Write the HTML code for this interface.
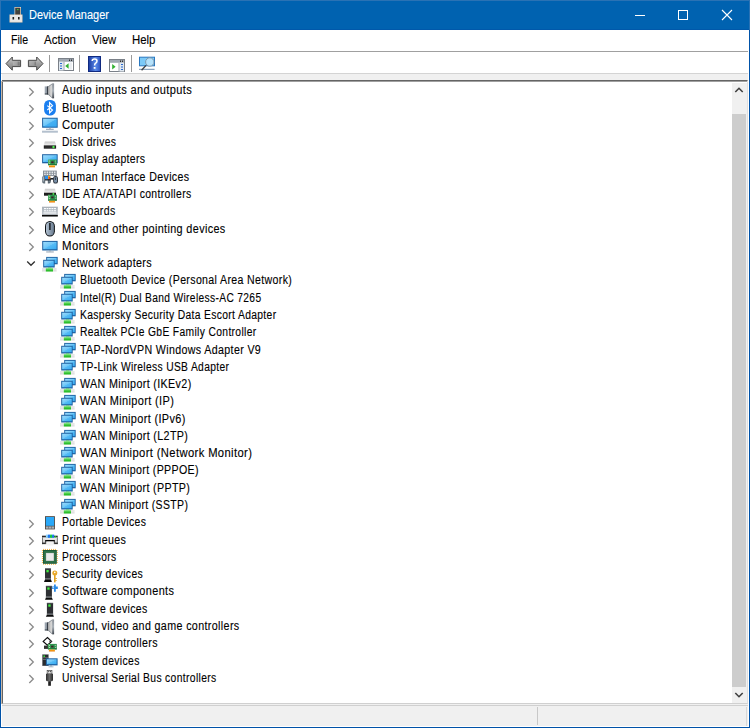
<!DOCTYPE html>
<html><head><meta charset="utf-8"><style>
*{margin:0;padding:0;box-sizing:border-box}
html,body{width:750px;height:728px;overflow:hidden;background:#f0f0f0;font-family:"Liberation Sans",sans-serif}
.a{position:absolute}
.ic{position:absolute;overflow:visible}
.t{position:absolute;font-size:12px;line-height:13.406px;white-space:pre;color:#000;transform-origin:0 0;-webkit-text-stroke:0.12px #000;letter-spacing:0.4px}
.m{position:absolute;font-size:12px;line-height:13.406px;white-space:pre;color:#000;-webkit-text-stroke:0.12px currentColor}
</style></head><body>
<svg width="0" height="0" style="position:absolute"><defs>
<linearGradient id="scr" x1="0" y1="0" x2="1" y2="1"><stop offset="0" stop-color="#9edcfc"/><stop offset=".5" stop-color="#6cc6f8"/><stop offset=".52" stop-color="#56bcf6"/><stop offset="1" stop-color="#36aaf2"/></linearGradient>
<linearGradient id="spkbox" x1="0" x2="1"><stop offset="0" stop-color="#7a8490"/><stop offset=".35" stop-color="#b0bac4"/><stop offset="1" stop-color="#3a4048"/></linearGradient>
<linearGradient id="spkcone" x1="0" x2="1"><stop offset="0" stop-color="#a0a0a0"/><stop offset=".5" stop-color="#d8d8d8"/><stop offset="1" stop-color="#c0c0c0"/></linearGradient>
<linearGradient id="spkbar" x1="0" x2="0" y1="0" y2="1"><stop offset="0" stop-color="#8a9098"/><stop offset=".5" stop-color="#a8b0b8"/><stop offset="1" stop-color="#40464e"/></linearGradient>
<linearGradient id="card" x1="0" x2="1"><stop offset="0" stop-color="#58b868"/><stop offset=".3" stop-color="#2e9a50"/><stop offset="1" stop-color="#2a8a48"/></linearGradient>
<linearGradient id="gold" x1="0" x2="0" y1="0" y2="1"><stop offset="0" stop-color="#ffb020"/><stop offset="1" stop-color="#e87800"/></linearGradient>
<linearGradient id="grn" x1="0" x2="0" y1="0" y2="1"><stop offset="0" stop-color="#70e070"/><stop offset="1" stop-color="#10b010"/></linearGradient>
<linearGradient id="dtop" x1="0" x2="0" y1="0" y2="1"><stop offset="0" stop-color="#c8c8c8"/><stop offset="1" stop-color="#f0f0f0"/></linearGradient>
<linearGradient id="kbg" x1="0" x2="0" y1="0" y2="1"><stop offset="0" stop-color="#a8b0b8"/><stop offset="1" stop-color="#c8ced4"/></linearGradient>
<linearGradient id="mse" x1="0" x2="1"><stop offset="0" stop-color="#b0c0d0"/><stop offset="1" stop-color="#6a7c90"/></linearGradient>
<linearGradient id="usbg" x1="0" x2="1"><stop offset="0" stop-color="#303030"/><stop offset=".5" stop-color="#6a6a6a"/><stop offset="1" stop-color="#2a2a2a"/></linearGradient>
<linearGradient id="ptr" x1="0" x2="0" y1="0" y2="1"><stop offset="0" stop-color="#f8f8f8"/><stop offset="1" stop-color="#c8c8c8"/></linearGradient>
</defs></svg>
<div class="a" style="left:0;top:0;width:750px;height:728px;background:#0052a8"></div>
<div class="a" style="left:0;top:0;width:750px;height:30px;background:#0062b0;border:1px solid #2a72b4;border-bottom:0"></div>
<div class="a" style="left:1px;top:29px;width:748px;height:1px;background:#0058aa"></div>
<div class="a" style="left:1px;top:30px;width:748px;height:697px;background:#f0f0f0"></div>
<!-- title -->
<svg class="ic" style="left:8px;top:6px" width="16" height="18" viewBox="0 0 16 18">
<rect x="6.5" y="1" width="6.5" height="8.5" fill="#f0d8c0"/><rect x="7.2" y="1.7" width="5.1" height="7.8" fill="#404040"/><rect x="9.2" y="3" width="1.2" height="1.2" fill="#40e040"/>
<rect x="1.5" y="8.5" width="13" height="8" fill="#f0d0b0"/><rect x="2.2" y="9" width="11.6" height="6.8" fill="#e8e8e8"/><rect x="4.5" y="11" width="1.6" height="2.5" fill="#202020"/><rect x="10" y="11" width="1.6" height="2.5" fill="#202020"/>
</svg>
<div class="m" style="left:28.8px;top:8.84px;color:#fff;transform:scaleX(0.915);transform-origin:0 0">Device Manager</div>
<div class="a" style="left:634.5px;top:14.5px;width:10px;height:1px;background:#fff"></div>
<div class="a" style="left:678px;top:9.5px;width:10px;height:10px;border:1px solid #fff"></div>
<svg class="ic" style="left:721px;top:9px" width="12" height="12" viewBox="0 0 12 12"><path d="M1 1 L11 11 M11 1 L1 11" stroke="#fff" stroke-width="1.1"/></svg>
<!-- menu -->
<div class="a" style="left:1px;top:30px;width:748px;height:21px;background:#fff"></div>
<div class="a" style="left:1px;top:51px;width:748px;height:1px;background:#a0a0a0"></div>
<div class="m" style="left:10.7px;top:33.84px;transform:scaleX(0.88);transform-origin:0 0">File</div>
<div class="m" style="left:43.7px;top:33.84px;transform:scaleX(0.958);transform-origin:0 0">Action</div>
<div class="m" style="left:92.2px;top:33.84px;transform:scaleX(0.934);transform-origin:0 0">View</div>
<div class="m" style="left:131.8px;top:33.84px;transform:scaleX(0.95);transform-origin:0 0">Help</div>
<!-- toolbar -->
<div class="a" style="left:1px;top:52px;width:748px;height:21px;background:#fff"></div>
<div class="a" style="left:1px;top:73px;width:748px;height:1px;background:#d4d4d4"></div>

<svg class="ic" style="left:5px;top:56px" width="17" height="16" viewBox="0 0 17 16">
<defs><linearGradient id="ag" x1="0" y1="0" x2="0" y2="1"><stop offset="0" stop-color="#d0d0d0"/><stop offset=".5" stop-color="#a0a0a0"/><stop offset="1" stop-color="#808080"/></linearGradient>
<linearGradient id="ag2" x1="0" y1="0" x2="1" y2="0"><stop offset="0" stop-color="#b8b8b8"/><stop offset=".6" stop-color="#a0a0a0"/><stop offset="1" stop-color="#505050"/></linearGradient></defs>
<path d="M1 7.6 L7.3 1 V4.3 H15.6 V10.6 H7.3 V14.2 Z" fill="url(#ag)" stroke="#4a4a4a" stroke-width="1"/><path d="M8 5.5 H14.5 V9.5 H8Z" fill="url(#ag2)" opacity=".7"/></svg>
<svg class="ic" style="left:27px;top:56px" width="17" height="16" viewBox="0 0 17 16">
<path d="M16 7.6 L9.7 1 V4.3 H1.4 V10.6 H9.7 V14.2 Z" fill="url(#ag)" stroke="#4a4a4a" stroke-width="1"/><path d="M2.5 5.5 H9 V9.5 H2.5Z" fill="url(#ag2)" opacity=".5"/></svg>
<div class="a" style="left:49px;top:55px;width:1px;height:17px;background:#9a9a9a"></div>
<svg class="ic" style="left:57.5px;top:58px" width="16" height="13" viewBox="0 0 16 13">
<rect x=".5" y=".5" width="15" height="12" fill="#fff" stroke="#7a8088"/><rect x="1" y="1" width="14" height="2.8" fill="#a0a8b2"/><rect x="11" y="1.5" width="1" height="1.5" fill="#303030"/><rect x="13" y="1.5" width="1" height="1.5" fill="#303030"/>
<rect x="1" y="3.8" width="4.5" height="8.7" fill="#e0e8f0"/><rect x="5.5" y="3.8" width="1" height="8.7" fill="#a0a8b0"/>
<rect x="2" y="5" width="2" height="1" fill="#2a6ad0"/><rect x="2" y="7.5" width="2" height="1" fill="#2a6ad0"/><rect x="2" y="10" width="2" height="1" fill="#2a6ad0"/>
<path d="M7.2 8 L10.6 5.2 V10.8Z" fill="#30b030"/><rect x="11.4" y="4.5" width="2.4" height="7.2" fill="#e8ecf0"/></svg>
<div class="a" style="left:79px;top:55px;width:1px;height:17px;background:#9a9a9a"></div>
<svg class="ic" style="left:88px;top:55.5px" width="13" height="16" viewBox="0 0 13 16">
<defs><linearGradient id="hg" x1="0" x2="1"><stop offset="0" stop-color="#1a3aa0"/><stop offset=".6" stop-color="#5a8ae8"/><stop offset="1" stop-color="#2a50c0"/></linearGradient></defs>
<rect x=".5" y=".5" width="12" height="15" fill="url(#hg)" stroke="#102a80"/>
<path d="M4.2 5 Q4.2 2.9 6.6 2.9 Q9 2.9 9 5 Q9 6.4 7.4 7.4 Q6.6 8 6.6 9.6" fill="none" stroke="#fff" stroke-width="1.5"/><rect x="5.7" y="11" width="1.8" height="1.8" fill="#fff"/></svg>
<svg class="ic" style="left:109px;top:58.5px" width="16" height="13" viewBox="0 0 16 13">
<rect x=".5" y=".5" width="15" height="12" fill="#fff" stroke="#7a8088"/><rect x="1" y="1" width="14" height="2.8" fill="#a0a8b2"/><rect x="11" y="1.5" width="1" height="1.5" fill="#303030"/><rect x="13" y="1.5" width="1" height="1.5" fill="#303030"/>
<rect x="10.5" y="3.8" width="4.5" height="8.7" fill="#e0e8f0"/><rect x="9.5" y="3.8" width="1" height="8.7" fill="#a0a8b0"/>
<rect x="12" y="5" width="2" height="1" fill="#2a6ad0"/><rect x="12" y="7.5" width="2" height="1" fill="#2a6ad0"/><rect x="12" y="10" width="2" height="1" fill="#2a6ad0"/>
<path d="M3.2 5 L6.6 7.8 L3.2 10.6Z" fill="#30b030"/></svg>
<div class="a" style="left:131px;top:55px;width:1px;height:17px;background:#9a9a9a"></div>
<svg class="ic" style="left:139px;top:56px" width="16" height="16" viewBox="0 0 16 16">
<rect x=".5" y="1.2" width="15" height="8.6" fill="#7ccaf8" stroke="#2a78c0"/><rect x="0" y="12.8" width="15.6" height="1" fill="#7090b0"/>
<circle cx="10.8" cy="6" r="4.2" fill="#b4e2fc" stroke="#7a8a9a" stroke-width=".8"/><path d="M7 9.4 L2.6 14.3" stroke="#404040" stroke-width="1.4"/></svg>

<!-- tree -->
<div class="a" style="left:2px;top:80px;width:746px;height:624px;background:#fff;border-top:1px solid #646464;border-left:1px solid #646464;border-right:1px solid #e0e0e0;border-bottom:1px solid #d0d0d0"></div>
<div class="a" style="left:2px;top:81px;width:745px;height:1px;background:#a0a0a0"></div>
<div class="a" style="left:732px;top:83px;width:15px;height:620px;background:#f0f0f0"></div>
<div class="a" style="left:732px;top:114px;width:14px;height:573px;background:#cdcdcd"></div>
<svg class="ic" style="left:734px;top:86px" width="10" height="8" viewBox="0 0 10 8"><path d="M1.3 6 L5 2.3 L8.7 6" fill="none" stroke="#404040" stroke-width="1.6"/></svg>
<svg class="ic" style="left:734px;top:691px" width="10" height="8" viewBox="0 0 10 8"><path d="M1.3 2 L5 5.7 L8.7 2" fill="none" stroke="#404040" stroke-width="1.6"/></svg>
<svg class="ic" style="left:28px;top:86.50px" width="8" height="10" viewBox="0 0 8 10"><path d="M1.3 1 L5.3 5 L1.3 9" fill="none" stroke="#8a8a8a" stroke-width="1.3"/></svg><svg class="ic" style="left:42px;top:82.90px" width="16" height="16" viewBox="0 0 16 16"><path d="M2.8 3.4 H6.1 V11.4 H2.8Z" fill="url(#spkbox)"/><rect x="5.3" y="3.4" width=".9" height="8" fill="#2a3038"/><rect x="2.8" y="10.6" width="3.3" height=".8" fill="#202830"/>
<path d="M6.1 3.4 L10.2 0.5 H12 V15.3 H10.2 L6.1 11.4Z" fill="url(#spkcone)"/><path d="M6.1 3.4 L10.2 0.5 L10.2 1.3 L6.1 4.2Z M6.1 11.4 L10.2 15.3 V14.5 L6.1 10.6Z" fill="#808890"/><rect x="10.2" y="0.5" width="1.9" height="14.8" fill="url(#spkbar)"/></svg><div class="t" style="left:61.8px;top:83.64px;transform:scaleX(0.9179)">Audio inputs and outputs</div><svg class="ic" style="left:28px;top:103.78px" width="8" height="10" viewBox="0 0 8 10"><path d="M1.3 1 L5.3 5 L1.3 9" fill="none" stroke="#8a8a8a" stroke-width="1.3"/></svg><svg class="ic" style="left:42px;top:100.18px" width="16" height="16" viewBox="0 0 16 16"><rect x="2.1" y="0" width="11.8" height="15.4" rx="5" ry="5.5" fill="#1b7ff0"/>
<path d="M5.3 5.6 L10.5 10 L7.6 12.9 V2.6 L10.5 5.6 L5.3 10" fill="none" stroke="#fff" stroke-width="1.15" stroke-linejoin="miter"/></svg><div class="t" style="left:61.8px;top:101.64px;transform:scaleX(0.9274)">Bluetooth</div><svg class="ic" style="left:28px;top:121.06px" width="8" height="10" viewBox="0 0 8 10"><path d="M1.3 1 L5.3 5 L1.3 9" fill="none" stroke="#8a8a8a" stroke-width="1.3"/></svg><svg class="ic" style="left:42px;top:117.46px" width="16" height="16" viewBox="0 0 16 16"><rect x="0.1" y="0.74" width="15.60" height="10.00" fill="#1e62a2"/><rect x="1.1" y="1.74" width="13.60" height="7.70" fill="url(#scr)"/><path d="M1.1 10.2 L14.7 1.74 V10.2Z" fill="#38a6f0" opacity=".5"/>
<rect x="7" y="10.7" width="2" height=".8" fill="#8898a8"/><rect x="4" y="11.8" width="7.7" height=".9" fill="#8090a4"/><rect x="0" y="13.7" width="15.9" height="2" fill="#b4c0ce"/></svg><div class="t" style="left:61.8px;top:118.64px;transform:scaleX(0.9443)">Computer</div><svg class="ic" style="left:28px;top:138.34px" width="8" height="10" viewBox="0 0 8 10"><path d="M1.3 1 L5.3 5 L1.3 9" fill="none" stroke="#8a8a8a" stroke-width="1.3"/></svg><svg class="ic" style="left:42px;top:134.74px" width="16" height="16" viewBox="0 0 16 16"><path d="M2.9 6.56 H13 L14.1 10.36 H1.8Z" fill="url(#dtop)"/><rect x="1.8" y="10.36" width="12.3" height="3.3" fill="#1e1e1e"/>
<rect x="2.5" y="11.8" width="8" height=".5" fill="#505050"/><circle cx="11.5" cy="12" r="1.2" fill="#50f050"/></svg><div class="t" style="left:61.8px;top:135.64px;transform:scaleX(0.8615)">Disk drives</div><svg class="ic" style="left:28px;top:155.62px" width="8" height="10" viewBox="0 0 8 10"><path d="M1.3 1 L5.3 5 L1.3 9" fill="none" stroke="#8a8a8a" stroke-width="1.3"/></svg><svg class="ic" style="left:42px;top:152.02px" width="16" height="16" viewBox="0 0 16 16"><rect x="0.1" y="2.2" width="15.60" height="9.10" fill="#1e62a2"/><rect x="1.1" y="3.2" width="13.60" height="6.80" fill="url(#scr)"/><rect x="6" y="7.6" width="8.90" height="5.60" fill="url(#card)"/><rect x="6" y="12.2" width="8.90" height="1" fill="#1e7038"/><rect x="9.2" y="9.4" width="2.4" height="1.8" fill="#40202a"/><g fill="#d8f0d8"><rect x="7.2" y="8.6" width=".9" height=".9"/><rect x="12.9" y="8.6" width=".9" height=".9"/><rect x="7.2" y="10.799999999999999" width=".9" height=".9"/><rect x="13.3" y="10.6" width=".9" height=".9"/></g><rect x="7" y="13.399999999999999" width="6.00" height="1.90" fill="url(#gold)"/></svg><div class="t" style="left:61.8px;top:152.64px;transform:scaleX(0.8712)">Display adapters</div><svg class="ic" style="left:28px;top:172.90px" width="8" height="10" viewBox="0 0 8 10"><path d="M1.3 1 L5.3 5 L1.3 9" fill="none" stroke="#8a8a8a" stroke-width="1.3"/></svg><svg class="ic" style="left:42px;top:169.30px" width="16" height="16" viewBox="0 0 16 16"><rect x="1" y="1.6" width="13.8" height="5.4" fill="#8a929a"/><g fill="#f6f8fa"><rect x="2.20" y="2.60" width="1.5" height="1.2"/><rect x="4.65" y="2.60" width="1.5" height="1.2"/><rect x="7.10" y="2.60" width="1.5" height="1.2"/><rect x="9.55" y="2.60" width="1.5" height="1.2"/><rect x="12.00" y="2.60" width="1.5" height="1.2"/><rect x="2.20" y="4.70" width="1.5" height="1.2"/><rect x="4.65" y="4.70" width="1.5" height="1.2"/><rect x="7.10" y="4.70" width="1.5" height="1.2"/><rect x="9.55" y="4.70" width="1.5" height="1.2"/><rect x="12.00" y="4.70" width="1.5" height="1.2"/></g>
<path d="M0.2 8.5 Q0.2 6.7 2 6.7 H3.2 V14.6 H1.8 Q0.2 14.6 0.2 12.8Z" fill="#66727c"/><rect x="0.9" y="7.5" width="1" height="5" fill="#a8b4bc"/>
<path d="M5.8 6.7 H7.2 Q8.8 6.7 8.8 8.5 V12.8 Q8.8 14.6 7.2 14.6 H5.8Z" fill="#5a6670"/><rect x="6.8" y="8" width=".9" height="4.5" fill="#98a4ac"/>
<rect x="3" y="6.9" width="3.2" height="3.4" fill="#2a90f0"/><rect x="6" y="6.9" width="2.4" height="3.6" fill="#f0b020"/><rect x="6.6" y="8" width="1.6" height="2.2" fill="#e84020"/>
<rect x="3" y="10.2" width="5.8" height="1.3" fill="#1a2028"/><rect x="8.4" y="9" width="3" height="1.6" fill="#1a2028"/><rect x="8.6" y="7" width="2.6" height="2" fill="#f4f6f8"/>
<rect x="11.2" y="6.9" width="4.7" height="7.7" rx="2.2" fill="#1e242c"/><rect x="12.1" y="7.8" width="2.9" height="6" rx="1.4" fill="#7890a8"/><rect x="13.2" y="8.5" width=".7" height="2.5" fill="#1e242c"/></svg><div class="t" style="left:61.8px;top:170.64px;transform:scaleX(0.8855)">Human Interface Devices</div><svg class="ic" style="left:28px;top:190.18px" width="8" height="10" viewBox="0 0 8 10"><path d="M1.3 1 L5.3 5 L1.3 9" fill="none" stroke="#8a8a8a" stroke-width="1.3"/></svg><svg class="ic" style="left:42px;top:186.58px" width="16" height="16" viewBox="0 0 16 16"><path d="M3 1.7 H13 L14 5.7 H2Z" fill="url(#dtop)"/><rect x="2" y="5.7" width="12" height="3" fill="#1e1e1e"/><circle cx="11.4" cy="7" r="1" fill="#50f050"/><rect x="6" y="7.7" width="8.90" height="5.90" fill="url(#card)"/><rect x="6" y="12.6" width="8.90" height="1" fill="#1e7038"/><rect x="9.2" y="9.5" width="2.4" height="1.8" fill="#40202a"/><g fill="#d8f0d8"><rect x="7.2" y="8.7" width=".9" height=".9"/><rect x="12.9" y="8.7" width=".9" height=".9"/><rect x="7.2" y="11.2" width=".9" height=".9"/><rect x="13.3" y="10.7" width=".9" height=".9"/></g><rect x="7" y="13.799999999999999" width="6.00" height="1.70" fill="url(#gold)"/></svg><div class="t" style="left:61.8px;top:187.64px;transform:scaleX(0.8685)">IDE ATA/ATAPI controllers</div><svg class="ic" style="left:28px;top:207.46px" width="8" height="10" viewBox="0 0 8 10"><path d="M1.3 1 L5.3 5 L1.3 9" fill="none" stroke="#8a8a8a" stroke-width="1.3"/></svg><svg class="ic" style="left:42px;top:203.86px" width="16" height="16" viewBox="0 0 16 16"><rect x="0" y="2.7" width="15.8" height="9.7" fill="url(#kbg)"/><rect x="0" y="10.9" width="15.8" height="1.6" fill="#0a0a0a"/>
<g fill="#fafcfe"><rect x="2" y="4" width="12" height="1.2"/><rect x="2" y="6.2" width="12" height="1.2"/><rect x="1.5" y="8.4" width="12.8" height="1.1"/></g>
<g fill="#b0b8c0"><rect x="4" y="4" width=".6" height="3.4"/><rect x="6.4" y="4" width=".6" height="3.4"/><rect x="8.8" y="4" width=".6" height="3.4"/><rect x="11.2" y="4" width=".6" height="3.4"/></g></svg><div class="t" style="left:61.8px;top:204.64px;transform:scaleX(0.8781)">Keyboards</div><svg class="ic" style="left:28px;top:224.74px" width="8" height="10" viewBox="0 0 8 10"><path d="M1.3 1 L5.3 5 L1.3 9" fill="none" stroke="#8a8a8a" stroke-width="1.3"/></svg><svg class="ic" style="left:42px;top:221.14px" width="16" height="16" viewBox="0 0 16 16"><rect x="3" y="0.1" width="9.9" height="15.4" rx="4.9" ry="5.2" fill="#0e1216"/><rect x="4" y="1.1" width="7.9" height="13.4" rx="3.9" ry="4.2" fill="url(#mse)"/>
<rect x="7.2" y="2" width="1.4" height="7" fill="#0e1216"/></svg><div class="t" style="left:61.8px;top:222.64px;transform:scaleX(0.9033)">Mice and other pointing devices</div><svg class="ic" style="left:28px;top:242.02px" width="8" height="10" viewBox="0 0 8 10"><path d="M1.3 1 L5.3 5 L1.3 9" fill="none" stroke="#8a8a8a" stroke-width="1.3"/></svg><svg class="ic" style="left:42px;top:238.42px" width="16" height="16" viewBox="0 0 16 16"><rect x="0.2" y="2.9" width="15.40" height="9.60" fill="#1e62a2"/><rect x="1.2" y="3.9" width="13.40" height="7.30" fill="url(#scr)"/><rect x="7" y="12.5" width="2" height=".8" fill="#8898a8"/><rect x="4.2" y="13.4" width="7.6" height="1.1" fill="#98a8b8"/></svg><div class="t" style="left:61.8px;top:239.64px;transform:scaleX(0.9525)">Monitors</div><svg class="ic" style="left:26px;top:259.50px" width="10" height="8" viewBox="0 0 10 8"><path d="M1.2 1.5 L5 5.3 L8.8 1.5" fill="none" stroke="#303030" stroke-width="1.3"/></svg><svg class="ic" style="left:42px;top:255.70px" width="16" height="16" viewBox="0 0 16 16"><rect x="4.2" y="0.9" width="11.50" height="7.40" fill="#1e62a2"/><rect x="5.15" y="1.85" width="9.60" height="5.20" fill="url(#scr)"/><rect x="1.2" y="3.8" width="11.50" height="7.70" fill="#1e62a2"/><rect x="2.15" y="4.75" width="9.60" height="5.50" fill="url(#scr)"/>
<g fill="#c4c4c4"><rect x="0" y="12.6" width="3.8" height=".8"/><rect x="11" y="12.6" width="3.6" height=".8"/><rect x="0" y="14.5" width="3.8" height=".8"/><rect x="11" y="14.5" width="3.6" height=".8"/></g>
<rect x="6" y="11.5" width="3.3" height=".8" fill="#50d050"/><rect x="3.8" y="12.2" width="7.2" height="3.3" fill="url(#grn)"/></svg><div class="t" style="left:61.8px;top:256.64px;transform:scaleX(0.8965)">Network adapters</div><svg class="ic" style="left:60px;top:272.98px" width="16" height="16" viewBox="0 0 16 16"><rect x="4.2" y="0.9" width="11.50" height="7.40" fill="#1e62a2"/><rect x="5.15" y="1.85" width="9.60" height="5.20" fill="url(#scr)"/><rect x="1.2" y="3.8" width="11.50" height="7.70" fill="#1e62a2"/><rect x="2.15" y="4.75" width="9.60" height="5.50" fill="url(#scr)"/>
<g fill="#c4c4c4"><rect x="0" y="12.6" width="3.8" height=".8"/><rect x="11" y="12.6" width="3.6" height=".8"/><rect x="0" y="14.5" width="3.8" height=".8"/><rect x="11" y="14.5" width="3.6" height=".8"/></g>
<rect x="6" y="11.5" width="3.3" height=".8" fill="#50d050"/><rect x="3.8" y="12.2" width="7.2" height="3.3" fill="url(#grn)"/></svg><div class="t" style="left:80.4px;top:273.64px;transform:scaleX(0.8811)">Bluetooth Device (Personal Area Network)</div><svg class="ic" style="left:60px;top:290.26px" width="16" height="16" viewBox="0 0 16 16"><rect x="4.2" y="0.9" width="11.50" height="7.40" fill="#1e62a2"/><rect x="5.15" y="1.85" width="9.60" height="5.20" fill="url(#scr)"/><rect x="1.2" y="3.8" width="11.50" height="7.70" fill="#1e62a2"/><rect x="2.15" y="4.75" width="9.60" height="5.50" fill="url(#scr)"/>
<g fill="#c4c4c4"><rect x="0" y="12.6" width="3.8" height=".8"/><rect x="11" y="12.6" width="3.6" height=".8"/><rect x="0" y="14.5" width="3.8" height=".8"/><rect x="11" y="14.5" width="3.6" height=".8"/></g>
<rect x="6" y="11.5" width="3.3" height=".8" fill="#50d050"/><rect x="3.8" y="12.2" width="7.2" height="3.3" fill="url(#grn)"/></svg><div class="t" style="left:80.4px;top:291.64px;transform:scaleX(0.8528)">Intel(R) Dual Band Wireless-AC 7265</div><svg class="ic" style="left:60px;top:307.54px" width="16" height="16" viewBox="0 0 16 16"><rect x="4.2" y="0.9" width="11.50" height="7.40" fill="#1e62a2"/><rect x="5.15" y="1.85" width="9.60" height="5.20" fill="url(#scr)"/><rect x="1.2" y="3.8" width="11.50" height="7.70" fill="#1e62a2"/><rect x="2.15" y="4.75" width="9.60" height="5.50" fill="url(#scr)"/>
<g fill="#c4c4c4"><rect x="0" y="12.6" width="3.8" height=".8"/><rect x="11" y="12.6" width="3.6" height=".8"/><rect x="0" y="14.5" width="3.8" height=".8"/><rect x="11" y="14.5" width="3.6" height=".8"/></g>
<rect x="6" y="11.5" width="3.3" height=".8" fill="#50d050"/><rect x="3.8" y="12.2" width="7.2" height="3.3" fill="url(#grn)"/></svg><div class="t" style="left:80.4px;top:308.64px;transform:scaleX(0.8592)">Kaspersky Security Data Escort Adapter</div><svg class="ic" style="left:60px;top:324.82px" width="16" height="16" viewBox="0 0 16 16"><rect x="4.2" y="0.9" width="11.50" height="7.40" fill="#1e62a2"/><rect x="5.15" y="1.85" width="9.60" height="5.20" fill="url(#scr)"/><rect x="1.2" y="3.8" width="11.50" height="7.70" fill="#1e62a2"/><rect x="2.15" y="4.75" width="9.60" height="5.50" fill="url(#scr)"/>
<g fill="#c4c4c4"><rect x="0" y="12.6" width="3.8" height=".8"/><rect x="11" y="12.6" width="3.6" height=".8"/><rect x="0" y="14.5" width="3.8" height=".8"/><rect x="11" y="14.5" width="3.6" height=".8"/></g>
<rect x="6" y="11.5" width="3.3" height=".8" fill="#50d050"/><rect x="3.8" y="12.2" width="7.2" height="3.3" fill="url(#grn)"/></svg><div class="t" style="left:80.4px;top:325.64px;transform:scaleX(0.8584)">Realtek PCIe GbE Family Controller</div><svg class="ic" style="left:60px;top:342.10px" width="16" height="16" viewBox="0 0 16 16"><rect x="4.2" y="0.9" width="11.50" height="7.40" fill="#1e62a2"/><rect x="5.15" y="1.85" width="9.60" height="5.20" fill="url(#scr)"/><rect x="1.2" y="3.8" width="11.50" height="7.70" fill="#1e62a2"/><rect x="2.15" y="4.75" width="9.60" height="5.50" fill="url(#scr)"/>
<g fill="#c4c4c4"><rect x="0" y="12.6" width="3.8" height=".8"/><rect x="11" y="12.6" width="3.6" height=".8"/><rect x="0" y="14.5" width="3.8" height=".8"/><rect x="11" y="14.5" width="3.6" height=".8"/></g>
<rect x="6" y="11.5" width="3.3" height=".8" fill="#50d050"/><rect x="3.8" y="12.2" width="7.2" height="3.3" fill="url(#grn)"/></svg><div class="t" style="left:80.4px;top:343.64px;transform:scaleX(0.8886)">TAP-NordVPN Windows Adapter V9</div><svg class="ic" style="left:60px;top:359.38px" width="16" height="16" viewBox="0 0 16 16"><rect x="4.2" y="0.9" width="11.50" height="7.40" fill="#1e62a2"/><rect x="5.15" y="1.85" width="9.60" height="5.20" fill="url(#scr)"/><rect x="1.2" y="3.8" width="11.50" height="7.70" fill="#1e62a2"/><rect x="2.15" y="4.75" width="9.60" height="5.50" fill="url(#scr)"/>
<g fill="#c4c4c4"><rect x="0" y="12.6" width="3.8" height=".8"/><rect x="11" y="12.6" width="3.6" height=".8"/><rect x="0" y="14.5" width="3.8" height=".8"/><rect x="11" y="14.5" width="3.6" height=".8"/></g>
<rect x="6" y="11.5" width="3.3" height=".8" fill="#50d050"/><rect x="3.8" y="12.2" width="7.2" height="3.3" fill="url(#grn)"/></svg><div class="t" style="left:80.4px;top:360.64px;transform:scaleX(0.8548)">TP-Link Wireless USB Adapter</div><svg class="ic" style="left:60px;top:376.66px" width="16" height="16" viewBox="0 0 16 16"><rect x="4.2" y="0.9" width="11.50" height="7.40" fill="#1e62a2"/><rect x="5.15" y="1.85" width="9.60" height="5.20" fill="url(#scr)"/><rect x="1.2" y="3.8" width="11.50" height="7.70" fill="#1e62a2"/><rect x="2.15" y="4.75" width="9.60" height="5.50" fill="url(#scr)"/>
<g fill="#c4c4c4"><rect x="0" y="12.6" width="3.8" height=".8"/><rect x="11" y="12.6" width="3.6" height=".8"/><rect x="0" y="14.5" width="3.8" height=".8"/><rect x="11" y="14.5" width="3.6" height=".8"/></g>
<rect x="6" y="11.5" width="3.3" height=".8" fill="#50d050"/><rect x="3.8" y="12.2" width="7.2" height="3.3" fill="url(#grn)"/></svg><div class="t" style="left:80.4px;top:377.64px;transform:scaleX(0.8931)">WAN Miniport (IKEv2)</div><svg class="ic" style="left:60px;top:393.94px" width="16" height="16" viewBox="0 0 16 16"><rect x="4.2" y="0.9" width="11.50" height="7.40" fill="#1e62a2"/><rect x="5.15" y="1.85" width="9.60" height="5.20" fill="url(#scr)"/><rect x="1.2" y="3.8" width="11.50" height="7.70" fill="#1e62a2"/><rect x="2.15" y="4.75" width="9.60" height="5.50" fill="url(#scr)"/>
<g fill="#c4c4c4"><rect x="0" y="12.6" width="3.8" height=".8"/><rect x="11" y="12.6" width="3.6" height=".8"/><rect x="0" y="14.5" width="3.8" height=".8"/><rect x="11" y="14.5" width="3.6" height=".8"/></g>
<rect x="6" y="11.5" width="3.3" height=".8" fill="#50d050"/><rect x="3.8" y="12.2" width="7.2" height="3.3" fill="url(#grn)"/></svg><div class="t" style="left:80.4px;top:394.64px;transform:scaleX(0.9140)">WAN Miniport (IP)</div><svg class="ic" style="left:60px;top:411.22px" width="16" height="16" viewBox="0 0 16 16"><rect x="4.2" y="0.9" width="11.50" height="7.40" fill="#1e62a2"/><rect x="5.15" y="1.85" width="9.60" height="5.20" fill="url(#scr)"/><rect x="1.2" y="3.8" width="11.50" height="7.70" fill="#1e62a2"/><rect x="2.15" y="4.75" width="9.60" height="5.50" fill="url(#scr)"/>
<g fill="#c4c4c4"><rect x="0" y="12.6" width="3.8" height=".8"/><rect x="11" y="12.6" width="3.6" height=".8"/><rect x="0" y="14.5" width="3.8" height=".8"/><rect x="11" y="14.5" width="3.6" height=".8"/></g>
<rect x="6" y="11.5" width="3.3" height=".8" fill="#50d050"/><rect x="3.8" y="12.2" width="7.2" height="3.3" fill="url(#grn)"/></svg><div class="t" style="left:80.4px;top:412.64px;transform:scaleX(0.9069)">WAN Miniport (IPv6)</div><svg class="ic" style="left:60px;top:428.50px" width="16" height="16" viewBox="0 0 16 16"><rect x="4.2" y="0.9" width="11.50" height="7.40" fill="#1e62a2"/><rect x="5.15" y="1.85" width="9.60" height="5.20" fill="url(#scr)"/><rect x="1.2" y="3.8" width="11.50" height="7.70" fill="#1e62a2"/><rect x="2.15" y="4.75" width="9.60" height="5.50" fill="url(#scr)"/>
<g fill="#c4c4c4"><rect x="0" y="12.6" width="3.8" height=".8"/><rect x="11" y="12.6" width="3.6" height=".8"/><rect x="0" y="14.5" width="3.8" height=".8"/><rect x="11" y="14.5" width="3.6" height=".8"/></g>
<rect x="6" y="11.5" width="3.3" height=".8" fill="#50d050"/><rect x="3.8" y="12.2" width="7.2" height="3.3" fill="url(#grn)"/></svg><div class="t" style="left:80.4px;top:429.64px;transform:scaleX(0.8933)">WAN Miniport (L2TP)</div><svg class="ic" style="left:60px;top:445.78px" width="16" height="16" viewBox="0 0 16 16"><rect x="4.2" y="0.9" width="11.50" height="7.40" fill="#1e62a2"/><rect x="5.15" y="1.85" width="9.60" height="5.20" fill="url(#scr)"/><rect x="1.2" y="3.8" width="11.50" height="7.70" fill="#1e62a2"/><rect x="2.15" y="4.75" width="9.60" height="5.50" fill="url(#scr)"/>
<g fill="#c4c4c4"><rect x="0" y="12.6" width="3.8" height=".8"/><rect x="11" y="12.6" width="3.6" height=".8"/><rect x="0" y="14.5" width="3.8" height=".8"/><rect x="11" y="14.5" width="3.6" height=".8"/></g>
<rect x="6" y="11.5" width="3.3" height=".8" fill="#50d050"/><rect x="3.8" y="12.2" width="7.2" height="3.3" fill="url(#grn)"/></svg><div class="t" style="left:80.4px;top:446.64px;transform:scaleX(0.9350)">WAN Miniport (Network Monitor)</div><svg class="ic" style="left:60px;top:463.06px" width="16" height="16" viewBox="0 0 16 16"><rect x="4.2" y="0.9" width="11.50" height="7.40" fill="#1e62a2"/><rect x="5.15" y="1.85" width="9.60" height="5.20" fill="url(#scr)"/><rect x="1.2" y="3.8" width="11.50" height="7.70" fill="#1e62a2"/><rect x="2.15" y="4.75" width="9.60" height="5.50" fill="url(#scr)"/>
<g fill="#c4c4c4"><rect x="0" y="12.6" width="3.8" height=".8"/><rect x="11" y="12.6" width="3.6" height=".8"/><rect x="0" y="14.5" width="3.8" height=".8"/><rect x="11" y="14.5" width="3.6" height=".8"/></g>
<rect x="6" y="11.5" width="3.3" height=".8" fill="#50d050"/><rect x="3.8" y="12.2" width="7.2" height="3.3" fill="url(#grn)"/></svg><div class="t" style="left:80.4px;top:463.64px;transform:scaleX(0.8861)">WAN Miniport (PPPOE)</div><svg class="ic" style="left:60px;top:480.34px" width="16" height="16" viewBox="0 0 16 16"><rect x="4.2" y="0.9" width="11.50" height="7.40" fill="#1e62a2"/><rect x="5.15" y="1.85" width="9.60" height="5.20" fill="url(#scr)"/><rect x="1.2" y="3.8" width="11.50" height="7.70" fill="#1e62a2"/><rect x="2.15" y="4.75" width="9.60" height="5.50" fill="url(#scr)"/>
<g fill="#c4c4c4"><rect x="0" y="12.6" width="3.8" height=".8"/><rect x="11" y="12.6" width="3.6" height=".8"/><rect x="0" y="14.5" width="3.8" height=".8"/><rect x="11" y="14.5" width="3.6" height=".8"/></g>
<rect x="6" y="11.5" width="3.3" height=".8" fill="#50d050"/><rect x="3.8" y="12.2" width="7.2" height="3.3" fill="url(#grn)"/></svg><div class="t" style="left:80.4px;top:481.64px;transform:scaleX(0.8895)">WAN Miniport (PPTP)</div><svg class="ic" style="left:60px;top:497.62px" width="16" height="16" viewBox="0 0 16 16"><rect x="4.2" y="0.9" width="11.50" height="7.40" fill="#1e62a2"/><rect x="5.15" y="1.85" width="9.60" height="5.20" fill="url(#scr)"/><rect x="1.2" y="3.8" width="11.50" height="7.70" fill="#1e62a2"/><rect x="2.15" y="4.75" width="9.60" height="5.50" fill="url(#scr)"/>
<g fill="#c4c4c4"><rect x="0" y="12.6" width="3.8" height=".8"/><rect x="11" y="12.6" width="3.6" height=".8"/><rect x="0" y="14.5" width="3.8" height=".8"/><rect x="11" y="14.5" width="3.6" height=".8"/></g>
<rect x="6" y="11.5" width="3.3" height=".8" fill="#50d050"/><rect x="3.8" y="12.2" width="7.2" height="3.3" fill="url(#grn)"/></svg><div class="t" style="left:80.4px;top:498.64px;transform:scaleX(0.8741)">WAN Miniport (SSTP)</div><svg class="ic" style="left:28px;top:518.50px" width="8" height="10" viewBox="0 0 8 10"><path d="M1.3 1 L5.3 5 L1.3 9" fill="none" stroke="#8a8a8a" stroke-width="1.3"/></svg><svg class="ic" style="left:42px;top:514.90px" width="16" height="16" viewBox="0 0 16 16"><rect x="3" y="1.2" width="9.9" height="13.2" fill="#4a4038"/><rect x="3.8" y="2" width="8.3" height="8.8" fill="#2aa8f8"/>
<rect x="3.8" y="11.4" width="8.3" height="2.3" fill="#a8b0b8"/><g fill="#505860"><rect x="6.3" y="11.4" width=".5" height="2.3"/><rect x="9.1" y="11.4" width=".5" height="2.3"/></g></svg><div class="t" style="left:61.8px;top:515.64px;transform:scaleX(0.8675)">Portable Devices</div><svg class="ic" style="left:28px;top:535.78px" width="8" height="10" viewBox="0 0 8 10"><path d="M1.3 1 L5.3 5 L1.3 9" fill="none" stroke="#8a8a8a" stroke-width="1.3"/></svg><svg class="ic" style="left:42px;top:532.18px" width="16" height="16" viewBox="0 0 16 16"><rect x="0" y="3.7" width="15.7" height="8.4" fill="url(#ptr)"/><rect x="0" y="3.7" width="15.7" height="1.6" fill="#2a2a2a"/>
<rect x="3.9" y="2.6" width="2" height="3.2" fill="#90d8ff"/><rect x="5.9" y="2.6" width="2.2" height="3.2" fill="#1a78f0"/><rect x="8.1" y="2.6" width="2" height="3.2" fill="#10d040"/><rect x="10.1" y="2.6" width="2.1" height="3.2" fill="#1a78f0"/><rect x="12.6" y="4.2" width="1.5" height="1.3" fill="#20e020"/>
<rect x="0" y="5.3" width=".8" height="6.8" fill="#606060"/><rect x="14.9" y="5.3" width=".8" height="6.8" fill="#606060"/>
<rect x="3.3" y="8" width="9.4" height="1.5" fill="#050505"/><rect x="3.3" y="8" width="1" height="4.1" fill="#202020"/><rect x="11.7" y="8" width="1" height="4.1" fill="#202020"/>
<rect x="0" y="10.6" width="3.3" height="1.5" fill="#303030"/><rect x="12.7" y="10.6" width="3" height="1.5" fill="#303030"/><rect x="4.3" y="9.5" width="7.4" height="4" fill="#f2f2f2"/></svg><div class="t" style="left:61.8px;top:533.64px;transform:scaleX(0.8901)">Print queues</div><svg class="ic" style="left:28px;top:553.06px" width="8" height="10" viewBox="0 0 8 10"><path d="M1.3 1 L5.3 5 L1.3 9" fill="none" stroke="#8a8a8a" stroke-width="1.3"/></svg><svg class="ic" style="left:42px;top:549.46px" width="16" height="16" viewBox="0 0 16 16"><g fill="#f0a830"><rect x="1.20" y="-0.1" width=".9" height="1.2"/><rect x="1.20" y="14.6" width=".9" height="1.2"/><rect x="-0.1" y="1.20" width="1.2" height=".9"/><rect x="14.6" y="1.20" width="1.2" height=".9"/><rect x="3.15" y="-0.1" width=".9" height="1.2"/><rect x="3.15" y="14.6" width=".9" height="1.2"/><rect x="-0.1" y="3.15" width="1.2" height=".9"/><rect x="14.6" y="3.15" width="1.2" height=".9"/><rect x="5.10" y="-0.1" width=".9" height="1.2"/><rect x="5.10" y="14.6" width=".9" height="1.2"/><rect x="-0.1" y="5.10" width="1.2" height=".9"/><rect x="14.6" y="5.10" width="1.2" height=".9"/><rect x="7.05" y="-0.1" width=".9" height="1.2"/><rect x="7.05" y="14.6" width=".9" height="1.2"/><rect x="-0.1" y="7.05" width="1.2" height=".9"/><rect x="14.6" y="7.05" width="1.2" height=".9"/><rect x="9.00" y="-0.1" width=".9" height="1.2"/><rect x="9.00" y="14.6" width=".9" height="1.2"/><rect x="-0.1" y="9.00" width="1.2" height=".9"/><rect x="14.6" y="9.00" width="1.2" height=".9"/><rect x="10.95" y="-0.1" width=".9" height="1.2"/><rect x="10.95" y="14.6" width=".9" height="1.2"/><rect x="-0.1" y="10.95" width="1.2" height=".9"/><rect x="14.6" y="10.95" width="1.2" height=".9"/><rect x="12.90" y="-0.1" width=".9" height="1.2"/><rect x="12.90" y="14.6" width=".9" height="1.2"/><rect x="-0.1" y="12.90" width="1.2" height=".9"/><rect x="14.6" y="12.90" width="1.2" height=".9"/></g><rect x="1" y="1" width="13.8" height="13.8" fill="#1e5a38"/><rect x="2" y="2" width="11.8" height="11.8" fill="#2e7048"/>
<rect x="3.9" y="3.9" width="8" height="8" fill="#c8c8c8"/><rect x="4.4" y="4.4" width="7" height="7" fill="#eaeaea"/></svg><div class="t" style="left:61.8px;top:550.64px;transform:scaleX(0.8486)">Processors</div><svg class="ic" style="left:28px;top:570.34px" width="8" height="10" viewBox="0 0 8 10"><path d="M1.3 1 L5.3 5 L1.3 9" fill="none" stroke="#8a8a8a" stroke-width="1.3"/></svg><svg class="ic" style="left:42px;top:566.74px" width="16" height="16" viewBox="0 0 16 16"><rect x="3" y="1.5" width="5.90" height="11.10" fill="#2e3034"/><rect x="3" y="1.5" width="5.90" height=".8" fill="#505458"/><rect x="3" y="11.4" width="5.90" height="1.2" fill="#909498"/><rect x="4.4" y="3.0" width="2.3" height="2.3" fill="#40f040"/><path d="M2 15 H9.9 L8.9 12.6 H3Z" fill="#0a0a0a"/><circle cx="12.8" cy="6" r="2.5" fill="#e8a828"/><circle cx="12.8" cy="5.4" r=".8" fill="#fff"/><rect x="12" y="8" width="1.6" height="7.4" fill="#e0a020"/><rect x="13.4" y="11" width="1.4" height="1" fill="#e0a020"/><rect x="13.4" y="13" width="1.2" height="1" fill="#e0a020"/></svg><div class="t" style="left:61.8px;top:567.64px;transform:scaleX(0.8642)">Security devices</div><svg class="ic" style="left:28px;top:587.62px" width="8" height="10" viewBox="0 0 8 10"><path d="M1.3 1 L5.3 5 L1.3 9" fill="none" stroke="#8a8a8a" stroke-width="1.3"/></svg><svg class="ic" style="left:42px;top:584.02px" width="16" height="16" viewBox="0 0 16 16"><rect x="3.9" y="1.9" width="6.00" height="11.80" fill="#2e3034"/><rect x="3.9" y="1.9" width="6.00" height=".8" fill="#505458"/><rect x="3.9" y="12.5" width="6.00" height="1.2" fill="#909498"/><rect x="5.3" y="3.4" width="2.3" height="2.3" fill="#40f040"/><path d="M3 15.7 H10.9 L9.9 13.7 H3.9Z" fill="#0a0a0a"/><path d="M9.9 2.6 H12 V0.4 H13.8 V2.6 H15.8 V5 H13.8 V7.8 H12 V5 H9.9Z" fill="#2a8ae8"/><rect x="10.5" y="3.3" width="1.4" height="1" fill="#fff"/></svg><div class="t" style="left:61.8px;top:584.64px;transform:scaleX(0.9077)">Software components</div><svg class="ic" style="left:28px;top:604.90px" width="8" height="10" viewBox="0 0 8 10"><path d="M1.3 1 L5.3 5 L1.3 9" fill="none" stroke="#8a8a8a" stroke-width="1.3"/></svg><svg class="ic" style="left:42px;top:601.30px" width="16" height="16" viewBox="0 0 16 16"><rect x="4.9" y="1.9" width="6.20" height="11.90" fill="#2e3034"/><rect x="4.9" y="1.9" width="6.20" height=".8" fill="#505458"/><rect x="4.9" y="12.600000000000001" width="6.20" height="1.2" fill="#909498"/><rect x="6.300000000000001" y="3.4" width="2.3" height="2.3" fill="#40f040"/><path d="M3.9 15.8 H11.9 L11.1 13.8 H4.9Z" fill="#0a0a0a"/></svg><div class="t" style="left:61.8px;top:602.64px;transform:scaleX(0.8749)">Software devices</div><svg class="ic" style="left:28px;top:622.18px" width="8" height="10" viewBox="0 0 8 10"><path d="M1.3 1 L5.3 5 L1.3 9" fill="none" stroke="#8a8a8a" stroke-width="1.3"/></svg><svg class="ic" style="left:42px;top:618.58px" width="16" height="16" viewBox="0 0 16 16"><path d="M2.8 3.4 H6.1 V11.4 H2.8Z" fill="url(#spkbox)"/><rect x="5.3" y="3.4" width=".9" height="8" fill="#2a3038"/><rect x="2.8" y="10.6" width="3.3" height=".8" fill="#202830"/>
<path d="M6.1 3.4 L10.2 0.5 H12 V15.3 H10.2 L6.1 11.4Z" fill="url(#spkcone)"/><path d="M6.1 3.4 L10.2 0.5 L10.2 1.3 L6.1 4.2Z M6.1 11.4 L10.2 15.3 V14.5 L6.1 10.6Z" fill="#808890"/><rect x="10.2" y="0.5" width="1.9" height="14.8" fill="url(#spkbar)"/></svg><div class="t" style="left:61.8px;top:619.64px;transform:scaleX(0.8938)">Sound, video and game controllers</div><svg class="ic" style="left:28px;top:639.46px" width="8" height="10" viewBox="0 0 8 10"><path d="M1.3 1 L5.3 5 L1.3 9" fill="none" stroke="#8a8a8a" stroke-width="1.3"/></svg><svg class="ic" style="left:42px;top:635.86px" width="16" height="16" viewBox="0 0 16 16"><path d="M5.4 1.5 L9.6 5.4 L5.4 9.1 L1.2 5.4Z" fill="none" stroke="#101010" stroke-width="1.2"/><rect x="7" y="4.8" width="2.6" height="1" fill="#606060"/>
<path d="M2 9.6 H6 V12.9 H2Z" fill="#303030"/><rect x="5.9" y="7.9" width="8.90" height="5.50" fill="url(#card)"/><rect x="5.9" y="12.4" width="8.90" height="1" fill="#1e7038"/><rect x="9.100000000000001" y="9.700000000000001" width="2.4" height="1.8" fill="#40202a"/><g fill="#d8f0d8"><rect x="7.1000000000000005" y="8.9" width=".9" height=".9"/><rect x="12.8" y="8.9" width=".9" height=".9"/><rect x="7.1000000000000005" y="11.0" width=".9" height=".9"/><rect x="13.200000000000001" y="10.9" width=".9" height=".9"/></g><rect x="6.9" y="13.6" width="6.00" height="1.90" fill="url(#gold)"/></svg><div class="t" style="left:61.8px;top:636.64px;transform:scaleX(0.8848)">Storage controllers</div><svg class="ic" style="left:28px;top:656.74px" width="8" height="10" viewBox="0 0 8 10"><path d="M1.3 1 L5.3 5 L1.3 9" fill="none" stroke="#8a8a8a" stroke-width="1.3"/></svg><svg class="ic" style="left:42px;top:653.14px" width="16" height="16" viewBox="0 0 16 16"><rect x="0.2" y="1.3" width="6.5" height="11.7" fill="#707478"/><rect x="0.8" y="1.9" width="5.3" height="10.5" fill="#2a2c30"/><rect x="1.4" y="2.5" width="1.6" height="1.4" fill="#40f040"/>
<g fill="#a0a4a8"><rect x="0.8" y="4.6" width="5.3" height=".5"/><rect x="0.8" y="6.5" width="5.3" height=".5"/></g><rect x="3.9" y="5.3" width="11.70" height="7.10" fill="#1e62a2"/><rect x="4.9" y="6.3" width="9.70" height="4.80" fill="url(#scr)"/><rect x="8" y="12.4" width="2" height="1" fill="#8898a8"/><rect x="6.5" y="13.4" width="5" height=".9" fill="#a0b0c0"/></svg><div class="t" style="left:61.8px;top:654.64px;transform:scaleX(0.8673)">System devices</div><svg class="ic" style="left:28px;top:674.02px" width="8" height="10" viewBox="0 0 8 10"><path d="M1.3 1 L5.3 5 L1.3 9" fill="none" stroke="#8a8a8a" stroke-width="1.3"/></svg><svg class="ic" style="left:42px;top:670.42px" width="16" height="16" viewBox="0 0 16 16"><rect x="5.2" y="0.4" width="4.7" height="3.4" fill="#fff" stroke="#505050" stroke-width=".8"/><rect x="6.1" y="1.2" width="1.2" height="1.1" fill="#303030"/><rect x="7.9" y="1.2" width="1.2" height="1.1" fill="#303030"/>
<path d="M4 3.7 H11 V9.8 Q11 11.3 9.6 11.3 H5.4 Q4 11.3 4 9.8Z" fill="url(#usbg)"/><rect x="6.2" y="11.2" width="2.7" height="4.6" fill="#202020"/></svg><div class="t" style="left:61.8px;top:671.64px;transform:scaleX(0.8608)">Universal Serial Bus controllers</div>
<!-- status -->
<div class="a" style="left:2px;top:705px;width:747px;height:1px;background:#d0d0d0"></div>
<div class="a" style="left:537px;top:707px;width:1px;height:18px;background:#c8c8c8"></div>
<div class="a" style="left:746px;top:707px;width:1px;height:19px;background:#d8d8d8"></div>
<div class="a" style="left:1px;top:726px;width:748px;height:1px;background:#fff"></div>
<div class="a" style="left:748px;top:30px;width:1px;height:697px;background:#fff"></div>
<div class="a" style="left:1px;top:74px;width:1px;height:653px;background:#fff"></div>
<div class="a" style="left:1px;top:81px;width:1px;height:623px;background:#c8b8a8"></div>
</body></html>
